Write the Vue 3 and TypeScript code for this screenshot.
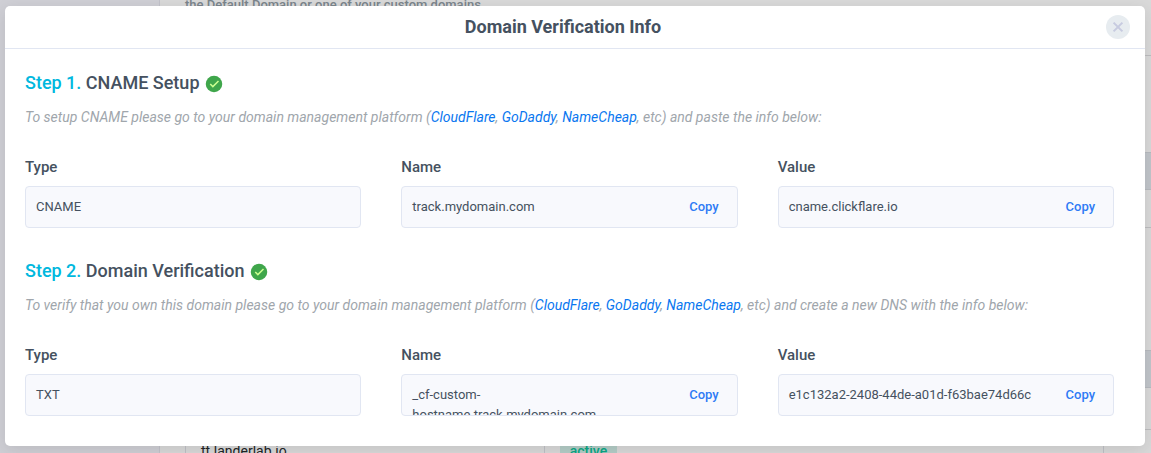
<script setup lang="ts">
interface Field {
  label: string
  value: string
  copyable: boolean
}

interface Step {
  id: number
  title: string
  before: string
  after: string
  fields: Field[]
}

const providers: string[] = ['CloudFlare', 'GoDaddy', 'NameCheap']

const steps: Step[] = [
  {
    id: 1,
    title: 'CNAME Setup',
    before: 'To setup CNAME please go to your domain management platform (',
    after: ', etc) and paste the info below:',
    fields: [
      { label: 'Type', value: 'CNAME', copyable: false },
      { label: 'Name', value: 'track.mydomain.com', copyable: true },
      { label: 'Value', value: 'cname.clickflare.io', copyable: true },
    ],
  },
  {
    id: 2,
    title: 'Domain Verification',
    before: 'To verify that you own this domain please go to your domain management platform (',
    after: ', etc) and create a new DNS with the info below:',
    fields: [
      { label: 'Type', value: 'TXT', copyable: false },
      { label: 'Name', value: '_cf-custom-hostname.track.mydomain.com', copyable: true },
      { label: 'Value', value: 'e1c132a2-2408-44de-a01d-f63bae74d66c', copyable: true },
    ],
  },
]

function copy(value: string): void {
  navigator.clipboard?.writeText(value)
}
</script>

<template>
  <div class="screen">
    <div class="page" aria-hidden="true">
      <div class="sidebar"></div>
      <div class="content">
        <p class="hint">the Default Domain or one of your custom domains.</p>
        <div class="panel"></div>
        <div class="band"></div>
        <div class="row"></div>
        <div class="space"></div>
        <div class="band"></div>
        <div class="row tall"></div>
        <div class="record">
          <span class="domain">tt.landerlab.io</span>
          <span class="state"><span class="tag">active</span></span>
        </div>
      </div>
    </div>

    <section class="modal" role="dialog" aria-labelledby="dialog-title">
      <header class="head">
        <h1 id="dialog-title">Domain Verification Info</h1>
        <button class="close" type="button" aria-label="Close">
          <svg width="24" height="24" viewBox="0 0 24 24">
            <circle cx="12" cy="12" r="12" fill="#e7ecf0" />
            <path d="M7.6 7.6 16.4 16.4M16.4 7.6 7.6 16.4" stroke="#c7cbe0" stroke-width="2" />
          </svg>
        </button>
      </header>

      <div class="body">
        <section v-for="step in steps" :key="step.id" class="step">
          <h2>
            <span><span class="number">Step {{ step.id }}.</span> {{ step.title }}</span>
            <svg class="check" width="18" height="18" viewBox="0 0 48 48" aria-hidden="true">
              <circle cx="24" cy="24" r="22" fill="#3fa64b" />
              <path d="M34.6 14.6 21 28.2l-5.6-5.6-2.8 2.8 8.4 8.4 16.4-16.4z" fill="#ccff90" />
            </svg>
          </h2>
          <p class="about">{{ step.before }}<template v-for="(p, i) in providers" :key="p"><template v-if="i">, </template><a href="#">{{ p }}</a></template>{{ step.after }}</p>
          <div class="fields">
            <div v-for="f in step.fields" :key="f.label" class="field">
              <h3>{{ f.label }}</h3>
              <div class="box">
                <span class="value">{{ f.value }}</span>
                <button v-if="f.copyable" class="copy" type="button" @click="copy(f.value)">Copy</button>
              </div>
            </div>
          </div>
        </section>
      </div>
    </section>
  </div>
</template>

<style>
body {
  margin: 0;
  background: #d9d9d9;
}
</style>

<style scoped>
* {
  box-sizing: border-box;
}

h1,
h2,
h3,
p {
  margin: 0;
}

.screen {
  position: relative;
  min-height: 100vh;
  padding: 6px 6px 7px 5px;
  overflow: hidden;
  font-family: Roboto, "Liberation Sans", sans-serif;
  color: #455160;
}

.page {
  position: absolute;
  inset: 0;
  display: flex;
  overflow: hidden;
}

.sidebar {
  flex: 0 0 160px;
  background: #cfcfd5;
  border-right: 1px solid #c2c2ca;
}

.content {
  flex: 1;
  min-width: 0;
}

.hint {
  height: 55px;
  padding-left: 25px;
  font-size: 13px;
  font-weight: 500;
  line-height: 10px;
  color: #7b858c;
}

.panel {
  height: 97px;
  border-top: 1px solid #bdbdbf;
}

.band {
  height: 38px;
  background: #c1c5ca;
  border-top: 1px solid #b7babf;
  border-bottom: 1px solid #b7babf;
}

.row {
  height: 38px;
  border-bottom: 1px solid #bdbdbf;
}

.row.tall {
  height: 42px;
}

.space {
  height: 122px;
}

.record {
  display: grid;
  grid-template-columns: 359px 1fr;
  height: 42px;
  margin: 0 47px 0 25px;
  border: solid #bfc0c6;
  border-width: 0 1px;
  line-height: 20px;
  font-size: 14px;
}

.domain {
  padding: 11px 15px;
  border-right: 1px solid #bfc0c6;
  color: #222426;
}

.state {
  padding: 11px 15px;
}

.tag {
  display: block;
  width: 57px;
  background: #b4cdc7;
  border-radius: 4px;
  text-align: center;
  font-weight: 500;
  color: #0aa885;
}

.modal {
  position: relative;
  background: #fff;
  border-radius: 5px;
  box-shadow: 0 4px 16px rgba(0, 0, 0, 0.1);
}

.head {
  display: grid;
  grid-template-columns: 1fr 24px;
  align-items: center;
  height: 43px;
  padding: 0 15px;
  border-bottom: 1px solid #e1e6f2;
}

h1 {
  text-align: center;
  font-size: 18px;
  font-weight: 700;
  line-height: 24px;
}

.close {
  width: 24px;
  height: 24px;
  padding: 0;
  border: 0;
  border-radius: 50%;
  background: none;
}

.close svg,
.check {
  display: block;
}

.body {
  display: grid;
  gap: 31px;
  padding: 22px 31px 30px 20px;
}

h2 {
  display: flex;
  align-items: center;
  gap: 5px;
  font-size: 18px;
  font-weight: 500;
  line-height: 24px;
}

.check {
  margin-top: 2px;
}

.number {
  color: #00b8de;
}

.about {
  margin-top: 12px;
  font-size: 14px;
  font-style: italic;
  font-weight: 400;
  line-height: 20px;
  color: #a0a6ac;
}

.about a {
  color: #0a77f0;
  text-decoration: none;
}

.fields {
  display: grid;
  grid-template-columns: repeat(3, minmax(0, 1fr));
  gap: 40px;
  margin-top: 30px;
}

h3 {
  margin-bottom: 9px;
  font-size: 15px;
  font-weight: 500;
  line-height: 20px;
}

.box {
  display: flex;
  align-items: flex-start;
  height: 42px;
  padding: 10px;
  overflow: hidden;
  background: #f8f9fd;
  border: 1px solid #e1e6f2;
  border-radius: 4px;
  font-size: 13px;
  line-height: 20px;
}

.value {
  flex: 1;
  min-width: 0;
  padding-right: 20px;
}

.copy {
  flex: none;
  padding: 0 8px;
  border: 0;
  background: none;
  font-family: inherit;
  font-size: 13px;
  font-weight: 500;
  line-height: 20px;
  color: #2f7bf5;
}
</style>
